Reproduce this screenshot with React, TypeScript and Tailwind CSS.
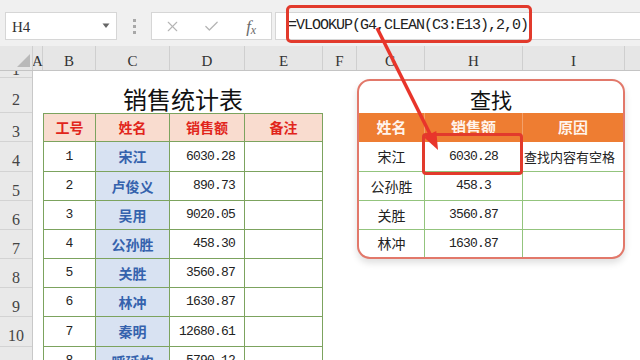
import React from "react";
import { X, Check } from "lucide-react";

const CJK = "font-['Noto_Sans_CJK_SC',sans-serif]";
const MONO = "font-['Liberation_Mono',monospace]";
const SERIF = "font-['Liberation_Serif',serif]";

const colHeads = [
  { l: "A", c: "w-[10px]" },
  { l: "B", c: "w-[53px]" },
  { l: "C", c: "w-[74px]" },
  { l: "D", c: "w-[75px]" },
  { l: "E", c: "w-[78px]" },
  { l: "F", c: "w-[34px]" },
  { l: "G", c: "w-[68px]" },
  { l: "H", c: "w-[98px]" },
  { l: "I", c: "w-[102px]" },
];

const rowHeads = [
  { n: "2", c: "h-[35px]" },
  { n: "3", c: "h-[29px]" },
  { n: "4", c: "h-[30px]" },
  { n: "5", c: "h-[29px]" },
  { n: "6", c: "h-[29px]" },
  { n: "7", c: "h-[29px]" },
  { n: "8", c: "h-[29px]" },
  { n: "9", c: "h-[29px]" },
  { n: "10", c: "h-[30px]" },
  { n: "11", c: "h-[29px]" },
];

const leftData = [
  { id: "1", name: "宋江", v: "6030.28", h: "h-[30px]" },
  { id: "2", name: "卢俊义", v: "890.73", h: "h-[29px]" },
  { id: "3", name: "吴用", v: "9020.05", h: "h-[29px]" },
  { id: "4", name: "公孙胜", v: "458.30", h: "h-[29px]" },
  { id: "5", name: "关胜", v: "3560.87", h: "h-[29px]" },
  { id: "6", name: "林冲", v: "1630.87", h: "h-[29px]" },
  { id: "7", name: "秦明", v: "12680.61", h: "h-[30px]" },
  { id: "8", name: "呼延灼", v: "5790.12", h: "h-[29px]" },
];

const rightData = [
  { name: "宋江", v: "6030.28", r: "查找内容有空格", h: "h-[30px]", b: "border-b" },
  { name: "公孙胜", v: "458.3", r: "", h: "h-[29px]", b: "border-b" },
  { name: "关胜", v: "3560.87", r: "", h: "h-[29px]", b: "border-b" },
  { name: "林冲", v: "1630.87", r: "", h: "h-[27px]", b: "" },
];

const G = "border-[#7ca35e]";

export default function App() {
  return (
    <div className="relative w-[640px] h-[360px] overflow-hidden bg-white">
      {/* toolbar */}
      <div className="h-[46px] bg-[#f0f0f0] flex items-start pt-[12px] pl-[5px]">
        <div className="w-[112px] h-[28px] bg-white border border-[#d6d6d6] flex items-center pl-[6px] pr-[6px]">
          <span className={`${SERIF} text-[15px] text-[#333] flex-1 pt-[2px]`}>H4</span>
          <svg width="8" height="6" viewBox="0 0 8 6">
            <path d="M0.5 0.5 L7.5 0.5 L4 5 Z" fill="#666" />
          </svg>
        </div>
        <div className="w-[34px] h-[28px] flex flex-col items-center justify-center gap-[3px]">
          <div className="w-[3px] h-[3px] bg-[#a8a8a8]" />
          <div className="w-[3px] h-[3px] bg-[#a8a8a8]" />
          <div className="w-[3px] h-[3px] bg-[#a8a8a8]" />
        </div>
        <div className="w-[121px] h-[28px] bg-white border border-[#d6d6d6] flex items-center">
          <div className="w-[40px] flex justify-center pl-[1px]">
            <X size={17} strokeWidth={1.6} color="#b5b5b5" />
          </div>
          <div className="w-[40px] flex justify-center">
            <Check size={17} strokeWidth={1.8} color="#b5b5b5" />
          </div>
          <div className="w-[40px] flex justify-center">
            <span className={`${SERIF} italic text-[17px] text-[#6a6a6a] leading-none`}>
              f<span className="text-[12px] relative top-[2px]">x</span>
            </span>
          </div>
        </div>
        <div className="flex-1 ml-[3px] h-[28px] bg-white border-y border-l border-[#d6d6d6] flex items-center pl-[12px]">
          <span className={`${MONO} text-[15px] tracking-[-1px] text-[#222] pt-[1px]`}>
            =VLOOKUP(G4,CLEAN(C3:E13),2,0)
          </span>
        </div>
      </div>

      {/* column headers */}
      <div className="h-[25px] flex bg-[#e6e6e6] border-b border-[#c4c4c4]">
        <div className="w-[33px] h-full relative border-r border-[#cfcfcf]">
          <svg className="absolute left-[17px] top-[8px]" width="13" height="13" viewBox="0 0 13 13">
            <path d="M13 0 L13 13 L0 13 Z" fill="#b9b9b9" />
          </svg>
        </div>
        {colHeads.map((c) => (
          <div
            key={c.l}
            className={`${c.c} h-full flex items-center justify-center pt-[7px] border-r border-[#cfcfcf] ${SERIF} text-[15px] text-[#333]`}
          >
            {c.l}
          </div>
        ))}
        <div className="flex-1" />
      </div>

      {/* body */}
      <div className="flex">
        {/* row headers */}
        <div className="w-[33px] bg-[#e9e9e9] border-r border-[#c8c8c8] flex flex-col">
          <div className="h-[7px] overflow-hidden flex items-end justify-center border-b border-[#d3d3d3]">
            <span className={`${SERIF} text-[16px] leading-[14px] text-[#444]`}>1</span>
          </div>
          {rowHeads.map((r) => (
            <div
              key={r.n}
              className={`${r.c} flex items-center justify-center pt-[9px] border-b border-[#d3d3d3] ${SERIF} text-[16px] leading-[16px] text-[#444]`}
            >
              {r.n}
            </div>
          ))}
        </div>

        {/* column A */}
        <div className="w-[10px]" />

        {/* left block B-E */}
        <div className="w-[280px] flex flex-col">
          <div className="h-[7px]" />
          <div className="h-[35px] flex items-end justify-center">
            <span className={`${CJK} text-[24px] leading-[29px] text-[#111]`}>销售统计表</span>
          </div>
          <div className="flex h-[29px]">
            {[
              { t: "工号", c: "w-[53px] border-l" },
              { t: "姓名", c: "w-[74px]" },
              { t: "销售额", c: "w-[75px]" },
              { t: "备注", c: "w-[78px]" },
            ].map((h) => (
              <div
                key={h.t}
                className={`${h.c} h-full flex items-center justify-center border-t border-r border-b ${G} bg-[#f9dccf] ${CJK} font-bold text-[14px] text-[#e1251b]`}
              >
                {h.t}
              </div>
            ))}
          </div>
          {leftData.map((d) => (
            <div key={d.id} className={`flex ${d.h}`}>
              <div className={`w-[53px] h-full flex items-center justify-center border-l border-r border-b ${G} ${MONO} text-[13px] text-[#222]`}>
                {d.id}
              </div>
              <div className={`w-[74px] h-full flex items-center justify-center border-r border-b ${G} bg-[#d8e2f2] ${CJK} font-bold text-[14px] text-[#3562ad]`}>
                {d.name}
              </div>
              <div className={`w-[75px] h-full flex items-center justify-end pr-[9px] border-r border-b ${G} ${MONO} text-[13px] tracking-[-0.8px] text-[#222]`}>
                {d.v}
              </div>
              <div className={`w-[78px] h-full border-r border-b ${G}`} />
            </div>
          ))}
        </div>

        {/* column F */}
        <div className="w-[34px]" />

        {/* right block G-I */}
        <div className="w-[268px] flex flex-col">
          <div className="h-[8px]" />
          <div className="border-2 border-[#e2786a] rounded-[13px] overflow-hidden bg-white shadow-[0_4px_7px_rgba(0,0,0,0.13)]">
            <div className="h-[32px] flex items-end justify-center">
              <span className={`${CJK} text-[21px] leading-[27px] text-[#111]`}>查找</span>
            </div>
            <div className={`flex h-[29px] bg-[#ee7d32] ${CJK} font-bold text-[15px] text-[#fff4ec]`}>
              <div className="w-[66px] h-full flex items-center justify-center border-r border-[#f3a06a]">姓名</div>
              <div className="w-[98px] h-full flex items-center justify-center border-r border-[#f3a06a]">销售额</div>
              <div className="w-[100px] h-full flex items-center justify-center">原因</div>
            </div>
            {rightData.map((d) => (
              <div key={d.name} className={`flex ${d.h} ${d.b} border-[#93c47d]`}>
                <div className={`w-[66px] h-full flex items-center justify-center border-r border-[#93c47d] ${CJK} text-[14px] text-[#222]`}>
                  {d.name}
                </div>
                <div className={`w-[98px] h-full flex items-center justify-center border-r border-[#93c47d] ${MONO} text-[13px] tracking-[-0.8px] text-[#222]`}>
                  {d.v}
                </div>
                <div className={`w-[100px] h-full flex items-center pl-[1px] whitespace-nowrap ${CJK} text-[13px] text-[#222]`}>
                  {d.r}
                </div>
              </div>
            ))}
          </div>
        </div>
      </div>

      {/* annotations */}
      <div className="absolute left-[286px] top-[5px] w-[246px] h-[38px] border-[3px] border-[#e23a2c] rounded-[5px]" />
      <div className="absolute left-[422px] top-[133px] w-[101px] h-[42px] border-[3px] border-[#e23a2c] rounded-[4px]" />
      <svg className="absolute left-0 top-0 pointer-events-none" width="640" height="360" viewBox="0 0 640 360">
        <line x1="377" y1="28" x2="431" y2="136" stroke="#e8352b" strokeWidth="3.5" />
        <polygon points="438,150 423.7,137.1 436.3,130.9" fill="#e8352b" />
      </svg>
    </div>
  );
}
